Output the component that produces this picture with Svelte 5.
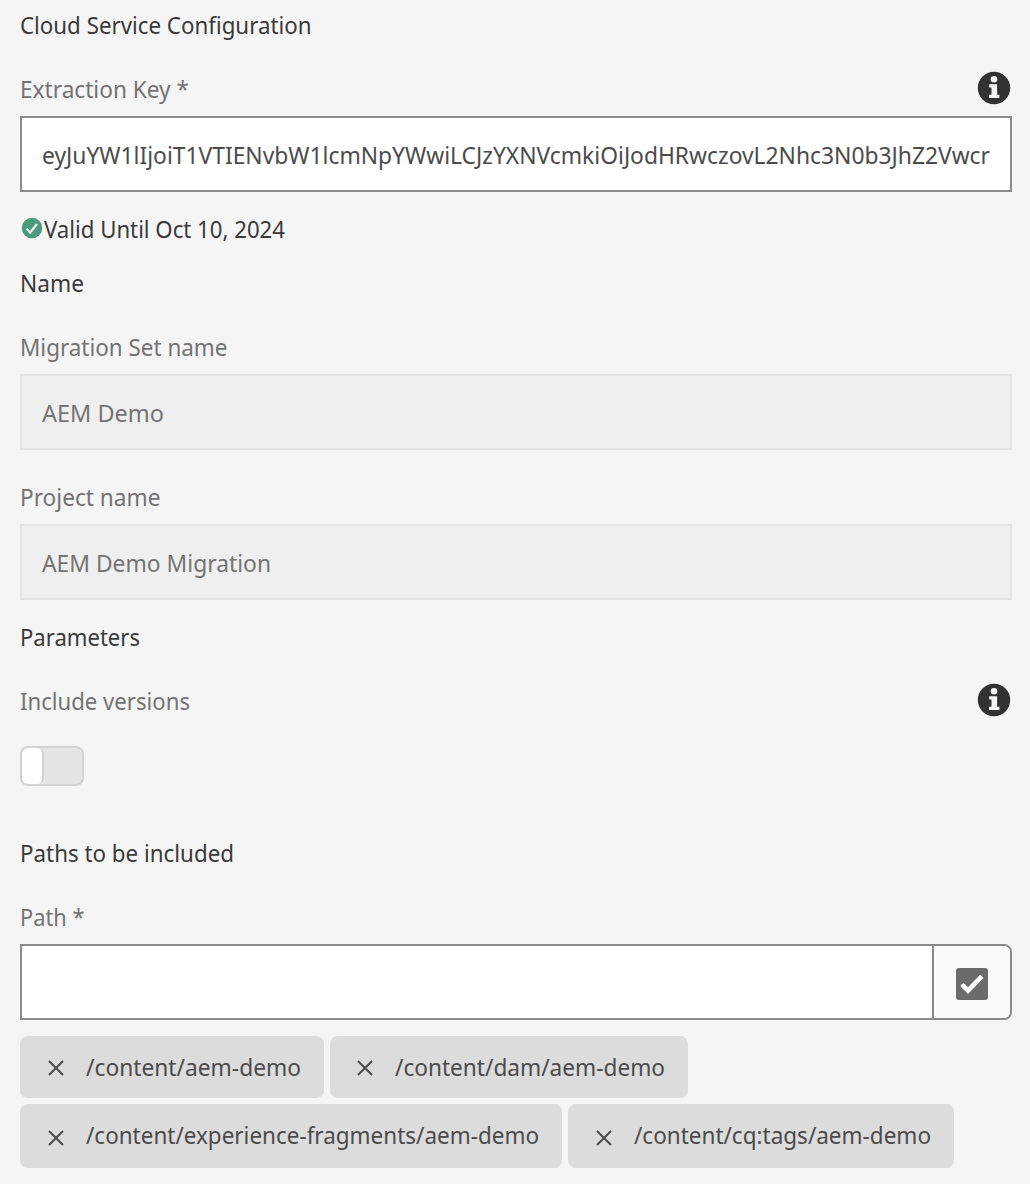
<script>
  const extractionKey =
    'eyJuYW1lIjoiT1VTIENvbW1lcmNpYWwiLCJzYXNVcmkiOiJodHRwczovL2Nhc3N0b3JhZ2Vwcr';

  const paths = [
    { path: '/content/aem-demo', width: 215 },
    { path: '/content/dam/aem-demo', width: 270 },
    { path: '/content/experience-fragments/aem-demo', width: 453 },
    { path: '/content/cq:tags/aem-demo', width: 297 }
  ];

  // Condenses a run of text so that it takes exactly the given width.
  function fit(node, width) {
    const inner = node.firstElementChild;
    const natural = inner.getBoundingClientRect().width;
    node.style.width = `${width}px`;
    inner.style.transform = `scaleX(${width / natural})`;
  }
</script>

{#snippet label(text, width)}
  <span class="fit" use:fit={width}><span>{text}</span></span>
{/snippet}

{#snippet info()}
  <svg class="info" width="34" height="34" viewBox="0 0 34 34" aria-label="Info">
    <circle cx="17" cy="17" r="16.2" fill="#323232" />
    <circle cx="17" cy="8.3" r="3.3" fill="#f5f5f5" />
    <path d="M12.2 13.2h7.9v10.6h2.3v3.3H12v-3.3h2.5v-7.2h-2.3z" fill="#f5f5f5" />
  </svg>
{/snippet}

<main>
  <h2>{@render label('Cloud Service Configuration', 291.5)}</h2>
  <div class="label">{@render label('Extraction Key *', 169)}{@render info()}</div>
  <div class="field"><div class="clip">{@render label(extractionKey, 948)}</div></div>
  <div class="valid">
    <svg width="22" height="22" viewBox="0 0 22 22">
      <circle cx="11" cy="11" r="10.3" fill="#4b9c7d" />
      <path d="M5.6 11.6l3.5 4L16 7" fill="none" stroke="#f5f5f5" stroke-width="2.2" />
    </svg>
    {@render label('Valid Until Oct 10, 2024', 241)}
  </div>

  <h2 class="name">{@render label('Name', 64)}</h2>
  <div class="label">{@render label('Migration Set name', 207.5)}</div>
  <div class="field disabled">{@render label('AEM Demo', 122)}</div>
  <div class="label project">{@render label('Project name', 140.5)}</div>
  <div class="field disabled">{@render label('AEM Demo Migration', 229)}</div>

  <h2 class="params">{@render label('Parameters', 120)}</h2>
  <div class="label">{@render label('Include versions', 170)}{@render info()}</div>
  <div class="switch"><div class="knob"></div></div>

  <h2 class="paths">{@render label('Paths to be included', 214)}</h2>
  <div class="label">{@render label('Path *', 64.5)}</div>
  <div class="field picker">
    <div class="entry"></div>
    <button aria-label="Select path">
      <svg width="32" height="32" viewBox="0 0 32 32">
        <rect width="32" height="32" rx="3" fill="#6b6b6b" />
        <path d="M5.8 16.3l6.2 6.3L25.8 8.3" fill="none" stroke="#fff" stroke-width="4.6" />
      </svg>
    </button>
  </div>
  <div class="tags">
    {#each paths as p}
      <div class="tag">
        <svg width="16" height="16" viewBox="0 0 16 16">
          <path d="M1 1l14 14M15 1L1 15" stroke="#4b4b4b" stroke-width="2" />
        </svg>
        {@render label(p.path, p.width)}
      </div>
    {/each}
  </div>
</main>

<style>
  :global(body) {
    background: #f5f5f5;
  }
  main {
    box-sizing: border-box;
    width: 1030px;
    height: 1184px;
    padding: 9px 18px 0 20px;
    overflow: hidden;
    font: 24px/32px 'Noto Sans', 'Open Sans', sans-serif;
    color: #3a3a3a;
  }
  .fit {
    display: block;
    flex: none;
    height: 32px;
    white-space: nowrap;
  }
  .fit > span {
    display: inline-block;
    transform-origin: 0 0;
  }
  h2 {
    margin: 0 0 32px;
    font: inherit;
    height: 32px;
  }
  .label {
    display: flex;
    justify-content: space-between;
    height: 32px;
    margin-bottom: 11px;
    color: #737373;
  }
  .info {
    margin: -2px 1px 0 0;
  }
  .field {
    box-sizing: border-box;
    height: 76px;
    padding: 21px 20px 0;
    border: 2px solid #8a8a8a;
    background: #fff;
    color: #4b4b4b;
  }
  .clip {
    overflow: hidden;
  }
  .disabled {
    border-color: #e4e4e4;
    background: #efefef;
    color: #747474;
  }
  .valid {
    display: flex;
    gap: 1px;
    margin-top: 21px;
    height: 32px;
  }
  .valid svg {
    margin: 4px 0 0 0.5px;
    width: 22px;
  }
  .name {
    margin-top: 22px;
  }
  .project {
    margin-top: 31px;
  }
  .params {
    margin-top: 21px;
  }
  .switch {
    box-sizing: border-box;
    width: 64px;
    height: 40px;
    margin-top: 29px;
    border: 2px solid #d3d3d3;
    border-radius: 8px;
    background: #e5e5e5;
    overflow: hidden;
  }
  .knob {
    width: 20px;
    height: 36px;
    border-radius: 6px;
    border-right: 2px solid #d3d3d3;
    background: #fff;
  }
  .paths {
    margin-top: 51px;
  }
  .picker {
    display: flex;
    padding: 0;
    border-radius: 0 8px 8px 0;
    overflow: hidden;
  }
  .entry {
    flex: 1;
  }
  button {
    display: flex;
    align-items: center;
    justify-content: center;
    box-sizing: border-box;
    width: 78px;
    padding: 4px 0 0;
    border: 0;
    border-left: 2px solid #8a8a8a;
    background: #fafafa;
  }
  .tags {
    display: flex;
    flex-wrap: wrap;
    gap: 6px;
    margin-top: 16px;
  }
  .tag {
    display: flex;
    box-sizing: border-box;
    height: 62px;
    padding: 15px 23px 0 28px;
    border-radius: 8px;
    background: #dcdcdc;
    color: #4b4b4b;
  }
  .tag:nth-child(2) {
    padding-left: 27px;
  }
  .tag:nth-child(n + 3) {
    height: 64px;
  }
  .tag svg {
    margin: 9px 22px 0 0;
  }
  .tag:nth-child(n + 3) svg {
    margin-top: 11px;
  }
</style>
